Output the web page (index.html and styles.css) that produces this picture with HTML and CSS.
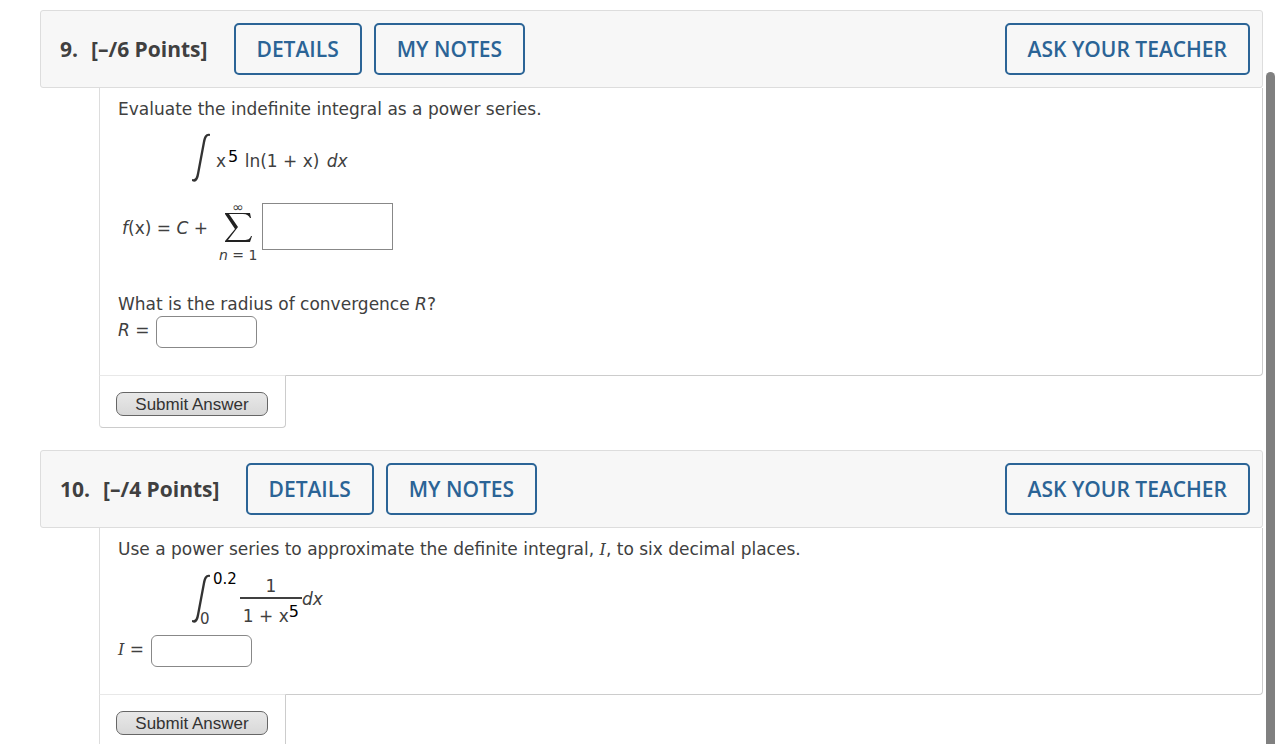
FILE: index.html
```
<!DOCTYPE html>
<html lang="en">
  <head>
    <title>Power Series Homework</title>
    <meta charset="utf-8">
    <link rel="stylesheet" href="styles.css">
  </head>
  <body>
    <main class="assignment">
      <section class="question">
        <header class="question-header">
          <h2><span>9.</span><span>[–/6 Points]</span></h2>
          <button type="button" class="action">DETAILS</button>
          <button type="button" class="action">MY NOTES</button>
          <button type="button" class="action teacher">ASK YOUR TEACHER</button>
        </header>
        <div class="question-body">
          <p>Evaluate the indefinite integral as a power series.</p>
          <div class="math integral-row">
            <svg class="integral" viewBox="0 0 20 50" role="img" aria-label="integral">
              <path d="M19 1C15 0 13 3 12 8L6 40C5 45 4 47 1 46V48C5 50 7 47 8 42L14 10C15 5 16 2 19 3Z" />
            </svg>
            <span class="integrand">x<sup>5</sup> ln(1 + x) <i>dx</i></span>
          </div>
          <div class="math sum-row">
            <label for="series"><i>f</i>(x) = <i>C</i> +</label>
            <div class="sum">
              <span class="infinity">∞</span>
              <svg class="sigma" viewBox="0 0 28 30" role="img" aria-label="sum">
                <path d="M1 0H26L27 5H26C25 3 23 1 19 1H5L14 14L4 27H20C24 27 26 26 27 23H28L26 29H1V28L11 16L1 1Z" />
              </svg>
              <span><i>n</i> = 1</span>
            </div>
            <input type="text" id="series" class="series-answer">
          </div>
          <p>What is the radius of convergence <i>R</i>?</p>
          <div class="answer">
            <label for="radius"><i>R</i> =</label>
            <input type="text" id="radius">
          </div>
        </div>
        <div class="submit">
          <button type="submit">Submit Answer</button>
        </div>
      </section>

      <section class="question">
        <header class="question-header">
          <h2><span>10.</span><span>[–/4 Points]</span></h2>
          <button type="button" class="action">DETAILS</button>
          <button type="button" class="action">MY NOTES</button>
          <button type="button" class="action teacher">ASK YOUR TEACHER</button>
        </header>
        <div class="question-body">
          <p>Use a power series to approximate the definite integral, <i class="roman-i">I</i>, to six decimal places.</p>
          <div class="math definite-row">
            <svg class="integral" viewBox="0 0 20 50" role="img" aria-label="integral">
              <path d="M19 1C15 0 13 3 12 8L6 40C5 45 4 47 1 46V48C5 50 7 47 8 42L14 10C15 5 16 2 19 3Z" />
            </svg>
            <div class="limits">
              <span class="upper">0.2</span>
              <span class="lower">0</span>
            </div>
            <div class="fraction">
              <span>1</span>
              <span class="denominator">1 + x<sup>5</sup></span>
            </div>
            <i>dx</i>
          </div>
          <div class="answer">
            <label for="value"><i class="roman-i">I</i> =</label>
            <input type="text" id="value">
          </div>
        </div>
        <div class="submit">
          <button type="submit">Submit Answer</button>
        </div>
      </section>
    </main>
    <div class="scroll-thumb"></div>
  </body>
</html>
```
FILE: styles.css
```
* {
  box-sizing: border-box;
}
html {
  height: 100%;
  overflow: hidden;
}
body {
  margin: 0;
  height: 100%;
  overflow: hidden;
  background: #fff;
  color: #404040;
  font: 17px/24px Verdana, "DejaVu Sans", sans-serif;
}
.assignment {
  padding: 10px 21px 0 40px;
}
.question {
  margin-bottom: 22px;
}
.question-header {
  display: flex;
  align-items: center;
  gap: 12px;
  padding: 12px 12px 12px 19px;
  border: 1px solid #ddd;
  border-radius: 3px;
  background: #f7f7f7;
  font-family: "Open Sans", sans-serif;
}
.question-header h2 {
  display: flex;
  gap: 13px;
  margin: 0 14px 0 0;
  font-size: 21px;
  line-height: 28px;
  font-weight: 700;
}
.action {
  height: 52px;
  padding: 0 21px;
  border: 2px solid #2b6496;
  border-radius: 5px;
  background: transparent;
  color: #2b6496;
  font: 600 21px/28px "Open Sans", sans-serif;
}
.teacher {
  margin-left: auto;
}
.question-body {
  margin-left: 59px;
  padding: 9px 18px 27px;
  border: 1px solid #ccc;
  border-top: 0;
  border-left-color: #ddd;
  border-radius: 0 0 4px 0;
}
.question-body p {
  margin: 0;
}
.math {
  display: flex;
}
.math sup {
  color: #000;
  font-size: 16px;
  line-height: 0;
  vertical-align: 5px;
}
.integral {
  flex: none;
  width: 20px;
  height: 50px;
  fill: #333;
}
.integral-row {
  align-items: center;
  gap: 5px;
  margin: 12px 0 18px 73px;
}
.integrand {
  padding-top: 6px;
}
.integrand sup {
  margin: 0 1px 0 2px;
}
.integrand i {
  margin-left: 2px;
}
.sum-row {
  align-items: flex-start;
  margin: 0 0 25px 4px;
}
.sum-row label {
  padding-top: 15px;
}
.sum {
  display: flex;
  flex-direction: column;
  align-items: center;
  margin: 0 5px 0 11px;
  font-size: 14px;
}
.infinity {
  font-size: 14px;
  line-height: 12px;
}
.sigma {
  width: 28px;
  height: 30px;
  fill: #222;
}
input {
  width: 101px;
  height: 32px;
  padding: 2px 8px;
  border: 1px solid #888;
  border-radius: 6px;
  background: #fff;
  font: inherit;
}
.series-answer {
  width: 131px;
  height: 47px;
  margin-top: 2px;
  border-radius: 0;
}
.answer {
  display: flex;
  gap: 7px;
}
.answer label {
  padding-top: 2px;
}
.roman-i {
  font-family: "DejaVu Serif", serif;
  font-size: 16px;
}
.definite-row {
  align-items: center;
  margin: 9px 0 8px 73px;
}
.limits {
  display: flex;
  flex-direction: column;
  justify-content: space-between;
  height: 56px;
  font-size: 15px;
  line-height: 16px;
}
.upper {
  padding-left: 2px;
  color: #000;
}
.lower {
  margin-left: -11px;
}
.fraction {
  display: flex;
  flex-direction: column;
  margin: 4px 0 0 3px;
  text-align: center;
  line-height: 22px;
}
.denominator {
  padding: 6px 3px 0;
  border-top: 2px solid #404040;
}
.submit {
  width: 187px;
  margin: -1px 0 0 59px;
  padding: 16px 16px 11px;
  border: 1px solid #ccc;
  border-top-color: #e8e8e8;
  border-left-color: #ddd;
  border-radius: 0 0 4px 4px;
  background: #fff;
  line-height: 0;
}
.submit button {
  width: 152px;
  height: 24px;
  padding: 2px 0 0;
  border: 1px solid #666;
  border-radius: 7px;
  background: linear-gradient(#e8e8e8, #d8d8d8);
  color: #333;
  font: 17px/20px Arial, "Liberation Sans", sans-serif;
}
/* overlays the right edge of the page */
.scroll-thumb {
  position: fixed;
  top: 72px;
  right: 9px;
  bottom: -9px;
  width: 9px;
  border-radius: 5px;
  background: #808080;
}
```
